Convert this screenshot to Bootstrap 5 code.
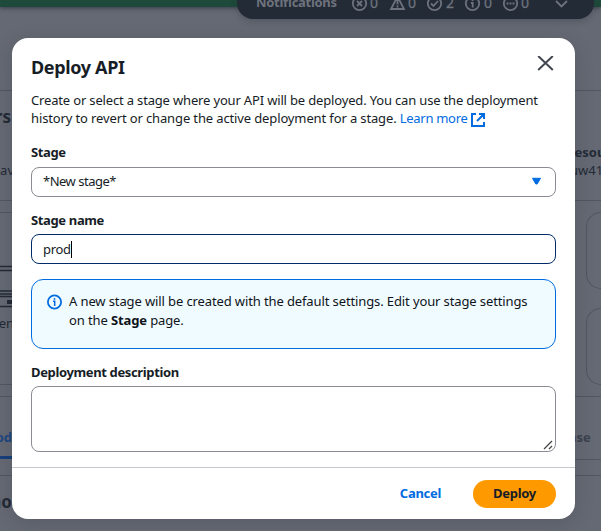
<!DOCTYPE html>
<html lang="en">
<head>
<meta charset="utf-8">
<meta name="viewport" content="width=device-width, initial-scale=1">
<title>Deploy API</title>
<link href="https://cdn.jsdelivr.net/npm/bootstrap@5.3.0/dist/css/bootstrap.min.css" rel="stylesheet">
<style>
body{font-family:"Noto Sans","Open Sans",sans-serif;font-size:13px;line-height:18px;color:#161d26;background:#656871}
.screen{width:601px;height:531px;background:#656973}
.console-top{height:7px;margin-bottom:83px;background:#1d4a3a;box-shadow:0 1px 4px #343c48}
.rule{height:1px;background:#505662}
.side{width:12px;color:#232b37}
.side-right{width:26px}
.tail{display:flex;justify-content:flex-end;white-space:nowrap;overflow:hidden;height:20px;line-height:20px}
.tail-lg{font-size:17px;padding-right:1px}
.clip{white-space:nowrap;overflow:hidden;height:20px;line-height:20px}
.clip span{margin-left:-9px}
.tile{height:77px;margin-left:11px;border:1px solid #505662;border-right:0;border-radius:16px 0 0 16px}
.tab-on{height:3px;background:#173f7c}
.notices{left:237px;top:0;width:357px;height:19px;background:#232b37;border-radius:0 0 16px 16px;color:#666b76;overflow:hidden;box-shadow:0 2px 6px rgba(35,43,55,.3)}
.notices svg{display:block}
.dialog{left:12px;top:38px;width:563px;height:481px;background:#fff;border-radius:16px;box-shadow:0 4px 20px 1px rgba(0,7,22,.12)}
.dialog-main{height:429px;padding:18px 19px 0}
.dialog-title{font-size:18px;line-height:22px;font-weight:700;letter-spacing:-.35px}
.line{white-space:nowrap;display:block;letter-spacing:-.165px}
.blue{color:#006ce0}
.caption{font-weight:700;line-height:18px;font-size:13px;letter-spacing:-.36px}
.field{border:1px solid #8c8c94;border-radius:8px;height:30px;padding:0 11px;line-height:26px;letter-spacing:-.5px}
.field.active{border-color:#002b66;letter-spacing:-.3px}
.caret{width:1px;height:17px;background:#000;margin-top:6px}
.info{height:70px;border:1px solid #006ce0;border-radius:12px;background:#f0fbff;padding:12px 15px;line-height:19px;color:#0f141a}
.info .line{letter-spacing:-.115px}
.area{height:66px;border:1px solid #8c8c94;border-radius:8px}
.dialog-foot{height:52px;border-top:1px solid #c6c6cd;padding-right:19px;letter-spacing:-.3px}
.deploy{width:83px;height:28px;background:#ff9900;border-radius:20px;line-height:26px}
</style>
</head>
<body>
<div class="screen position-relative overflow-hidden">
  <div class="console-top"></div>
  <div class="rule"></div>
  <div class="d-flex justify-content-between">
    <div class="side">
      <div class="tail tail-lg fw-bold" style="margin-top:16px"><span>rs</span></div>
      <div class="tail" style="margin-top:33px"><span style="margin-right:-2px">:av</span></div>
      <div class="rule" style="margin-top:20px"></div>
      <div class="rule" style="margin-top:11px"></div>
      <svg class="d-block" width="12" height="44" style="margin-top:52px"><path d="M0 1.500h12M0 5.500h12M0 26h12M0 29h12M0 31.500h12M0 41.500h12" stroke="#232b37" stroke-width="1.300"/><rect x="7" y="35" width="5" height="4" fill="#232b37"/></svg>
      <div class="tail" style="margin-top:4px"><span style="margin-right:-2px">en</span></div>
      <div class="rule" style="margin-top:51px"></div>
      <div class="rule" style="margin-top:11px"></div>
      <div class="tail fw-bold" style="margin-top:30px;color:#1d4680"><span>od</span></div>
      <div class="tab-on" style="margin-top:9px"></div>
      <div class="rule" style="margin-top:16px"></div>
      <div class="tail tail-lg fw-bold" style="margin-top:16px;padding-right:0"><span>no</span></div>
    </div>
    <div class="side side-right">
      <div class="clip fw-bold" style="margin-top:51px"><span>Resource</span></div>
      <div class="clip" style="margin-top:-2px"><span style="margin-left:-5px">uw41</span></div>
      <div class="rule" style="margin-top:20px"></div>
      <div class="tile" style="margin-top:11px"></div>
      <div class="tile" style="margin-top:19px"></div>
      <div class="rule" style="margin-top:11px"></div>
      <div class="clip fw-bold" style="margin-top:30px;color:#3b424e"><span style="margin-left:-7px">nse</span></div>
      <div class="rule" style="margin-top:12px"></div>
      <div class="rule" style="margin-top:15px"></div>
    </div>
  </div>

  <div class="notices position-absolute">
    <svg width="357" height="19" fill="none" stroke="#6d727c" stroke-width="1.8" font-family="Noto Sans,sans-serif" font-size="13">
      <g fill="#6d727c" stroke="none"><text x="19" y="7" font-weight="700" textLength="81" lengthAdjust="spacing">Notifications</text><g font-size="14" stroke="#6d727c" stroke-width=".3"><text x="133" y="7.500">0</text><text x="171" y="7.500">0</text><text x="209" y="7.500">2</text><text x="247" y="7.500">0</text><text x="284" y="7.500">0</text></g></g>
      <circle cx="122.500" cy="3.500" r="6.700"/><path d="m120 1 5 5m0-5-5 5"/>
      <path d="m160.500-3.500 6.500 12.500h-13zM160.500 0v4.500M160.500 5.500v2"/>
      <circle cx="197.500" cy="3.500" r="6.700"/><path d="m194 3.500 2.500 2.500 4.500-5"/>
      <circle cx="235.500" cy="3.500" r="6.700"/><path d="M234 3h1.700v4.500M235.500-1v2"/>
      <circle cx="273.500" cy="3.500" r="6.700"/><path d="M269.500 3.500h8" stroke-dasharray="2 1"/>
      <path d="m319 1 5.500 5.500 5.500-5.500"/>
    </svg>
  </div>

  <div class="dialog position-absolute d-flex flex-column" role="dialog" aria-label="Deploy API">
    <div class="dialog-main">
      <div class="d-flex justify-content-between">
        <div class="dialog-title">Deploy API</div>
        <svg width="22" height="22" viewBox="0 0 22 22" fill="none" stroke="#424650" stroke-width="2"><path d="M4.200 0 18.800 14M18.800 0 4.200 14"/></svg>
      </div>
      <div style="margin-top:13px"><span class="line">Create or select a stage where your API will be deployed. You can use the deployment</span><span class="line"><span style="letter-spacing:-.13px">history to revert or change the active deployment for a stage. </span><span class="blue" style="letter-spacing:-.3px">Learn more</span> <svg width="14" height="14" viewBox="0 0 14 14" fill="none" stroke="#006ce0" stroke-width="2" style="vertical-align:-4px;margin-left:.5px"><path d="M5 1H1v12h12V9M8 1h5v5M13 1 6 8"/></svg></span></div>
      <div class="caption" style="margin-top:16px">Stage</div>
      <div class="field d-flex justify-content-between" style="margin-top:6px"><span>*New stage*</span><svg width="11" height="9" style="margin:9px 2px 0 0"><path d="M1.500 1.300h8L6.200 7H4.800z" fill="#006ce0" stroke="#006ce0" stroke-linejoin="round"/></svg></div>
      <div class="caption" style="margin-top:14px">Stage name</div>
      <div class="field active d-flex" style="margin-top:5px"><span style="line-height:29px">prod</span><span class="caret"></span></div>
      <div class="info d-flex" style="margin-top:15px"><svg class="flex-shrink-0" width="16" height="16" viewBox="0 0 16 16" fill="none" stroke="#006ce0" stroke-width="1.800" style="margin:2px 6px 0 0"><circle cx="7.500" cy="8" r="6.600"/><path d="M6 7.200h1.700V12M7.500 4v1.700" stroke-width="1.500"/></svg><div><span class="line">A new stage will be created with the default settings. Edit your stage settings</span><span class="line">on the <b>Stage</b> page.</span></div></div>
      <div class="caption" style="margin-top:14px">Deployment description</div>
      <div class="area d-flex align-items-end justify-content-end" style="margin-top:5px"><svg width="12" height="12" fill="none" stroke="#444" stroke-width="1.200"><path d="m1 10 8-8M6 10l3-3"/></svg></div>
    </div>
    <div class="dialog-foot d-flex align-items-center justify-content-end fw-bold"><span class="blue" style="margin:-2px 32px 0 0">Cancel</span><div class="deploy text-center">Deploy</div></div>
  </div>
</div>
<script src="https://cdn.jsdelivr.net/npm/bootstrap@5.3.0/dist/js/bootstrap.bundle.min.js"></script>
</body>
</html>
